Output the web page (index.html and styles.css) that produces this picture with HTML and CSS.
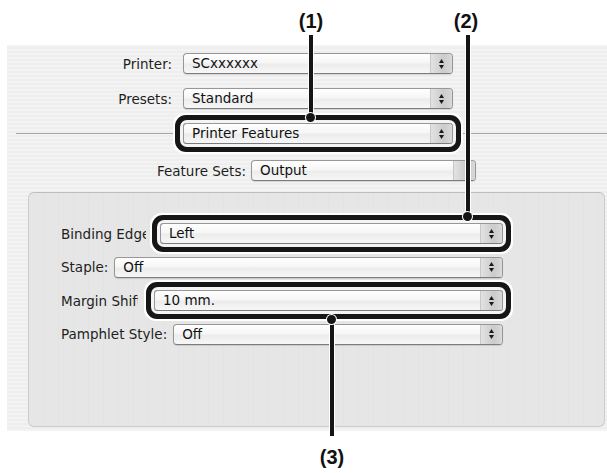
FILE: index.html
```html
<!DOCTYPE html>
<html>
<head>
  <title>Printer Features</title>
  <link rel="stylesheet" href="styles.css">
</head>
<body>
  <div class="page">
    <div class="dialog">
      <div class="top">
        <span class="label">Printer:</span>
        <div class="popup"><span class="value">SCxxxxxx</span><span class="arrows"><svg width="7" height="12" viewBox="0 0 7 12"><polygon points="3.5,1 6,5 1,5"/><polygon points="1,7 6,7 3.5,11"/></svg></span></div>
        <span class="label">Presets:</span>
        <div class="popup"><span class="value">Standard</span><span class="arrows"><svg width="7" height="12" viewBox="0 0 7 12"><polygon points="3.5,1 6,5 1,5"/><polygon points="1,7 6,7 3.5,11"/></svg></span></div>
      </div>

      <div class="sep-row">
        <div class="rule rule-left"></div>
        <div class="popup popup-pane hl"><span class="value">Printer Features</span><span class="arrows"><svg width="7" height="12" viewBox="0 0 7 12"><polygon points="3.5,1 6,5 1,5"/><polygon points="1,7 6,7 3.5,11"/></svg></span></div>
        <div class="rule"></div>
      </div>

      <div class="sets">
        <span class="label">Feature Sets:</span>
        <div class="popup"><span class="value">Output</span><span class="arrows"></span></div>
      </div>

      <div class="box">
        <div class="opt">
          <span class="label label-binding">Binding Edge:</span>
          <div class="popup hl"><span class="value">Left</span><span class="arrows"><svg width="7" height="12" viewBox="0 0 7 12"><polygon points="3.5,1 6,5 1,5"/><polygon points="1,7 6,7 3.5,11"/></svg></span></div>
        </div>
        <div class="opt">
          <span class="label">Staple:</span>
          <div class="popup"><span class="value">Off</span><span class="arrows"><svg width="7" height="12" viewBox="0 0 7 12"><polygon points="3.5,1 6,5 1,5"/><polygon points="1,7 6,7 3.5,11"/></svg></span></div>
        </div>
        <div class="opt">
          <span class="label label-margin">Margin Shift:</span>
          <div class="popup hl"><span class="value">10 mm.</span><span class="arrows"><svg width="7" height="12" viewBox="0 0 7 12"><polygon points="3.5,1 6,5 1,5"/><polygon points="1,7 6,7 3.5,11"/></svg></span></div>
        </div>
        <div class="opt">
          <span class="label">Pamphlet Style:</span>
          <div class="popup"><span class="value">Off</span><span class="arrows"><svg width="7" height="12" viewBox="0 0 7 12"><polygon points="3.5,1 6,5 1,5"/><polygon points="1,7 6,7 3.5,11"/></svg></span></div>
        </div>
      </div>
    </div>

    <!-- callout marks drawn over the dialog -->
    <div class="callouts">
      <span class="num num-1">(1)</span>
      <span class="num num-2">(2)</span>
      <span class="num num-3">(3)</span>
      <div class="vline line-1"></div>
      <div class="vline line-2"></div>
      <div class="vline line-3"></div>
      <div class="dot dot-1"></div>
      <div class="dot dot-2"></div>
      <div class="dot dot-3"></div>
    </div>
  </div>
</body>
</html>
```

FILE: styles.css
```css
body {
  margin: 0;
  background: #fff;
  font-family: "DejaVu Sans", sans-serif;
  font-size: 13.5px;
  color: #1e1e1e;
}

.page {
  position: relative;
  width: 607px;
  height: 473px;
  overflow: hidden;
  padding-top: 45px;
  box-sizing: border-box;
}

.dialog {
  margin-left: 7px;
  width: 600px;
  height: 386px;
  box-sizing: border-box;
  padding-top: 8px;
  background: repeating-linear-gradient(#f3f3f3 0, #f3f3f3 2px, #eeeeee 2px, #eeeeee 4px);
}

.label {
  white-space: nowrap;
}

.top {
  display: grid;
  grid-template-columns: 165px 270px;
  column-gap: 11px;
  row-gap: 14px;
  align-items: center;
}

.top .label {
  text-align: right;
}

.popup {
  display: flex;
  height: 21px;
  box-sizing: border-box;
  border: 1px solid #979797;
  border-bottom-color: #7c7c7c;
  border-radius: 4px;
  background: linear-gradient(#ffffff, #f6f6f6 45%, #ececec 55%, #f7f7f7);
  box-shadow: 0 1px 1px rgba(0, 0, 0, 0.12);
  color: #111;
}

.popup .value {
  flex: 1;
  padding-left: 8px;
  line-height: 19px;
  white-space: nowrap;
  overflow: hidden;
}

.popup .arrows {
  width: 21px;
  display: flex;
  align-items: center;
  justify-content: center;
  border-left: 1px solid #c8c8c8;
  border-radius: 0 3px 3px 0;
  background: linear-gradient(90deg, #e2e2e2, #cbcbcb 60%, #d9d9d9);
}

.popup .arrows svg {
  fill: #1a1a1a;
}

.hl {
  position: relative;
  z-index: 2;
  box-shadow: 0 0 0 3px #f4f4f4, 0 0 0 8px #161616, 0 0 0 10px #fff;
}

.sep-row {
  display: flex;
  align-items: center;
  margin-top: 14px;
  margin-left: 9px;
}

.rule {
  flex: 1;
  height: 1px;
  background: #a6a6a6;
}

.rule-left {
  flex: none;
  width: 167px;
}

.popup-pane {
  width: 270px;
}

.sets {
  display: grid;
  grid-template-columns: 239px 225px;
  column-gap: 5px;
  align-items: center;
  margin-top: 16px;
}

.sets .label {
  text-align: right;
}

.box {
  margin: 11px 2px 0 21px;
  height: 235px;
  box-sizing: border-box;
  padding: 30px 101px 0 32px;
  border: 1px solid #cbcbcb;
  border-top-color: #bdbdbd;
  border-radius: 6px;
  background: repeating-linear-gradient(90deg, #e6e6e6 0, #e6e6e6 14px, #e3e3e3 14px, #e3e3e3 15px);
  display: flex;
  flex-direction: column;
  gap: 12.5px;
}

.opt {
  display: flex;
  align-items: center;
  gap: 6px;
}

.opt .popup {
  flex: 1;
}

/* these two labels are partly covered by the popup, as in the dialog */
.label-binding {
  flex: none;
  width: 85px;
  margin-right: 8px;
  overflow: hidden;
}

.label-margin {
  flex: none;
  width: 77px;
  margin-right: 10px;
  overflow: hidden;
}

.callouts {
  position: absolute;
  left: 0;
  top: 0;
  width: 607px;
  height: 473px;
  z-index: 5;
}

.num {
  position: absolute;
  font-family: "Liberation Sans", Arial, sans-serif;
  font-weight: bold;
  font-size: 20px;
  color: #111;
  width: 40px;
  text-align: center;
}

.num-1 { left: 291px; top: 10px; }
.num-2 { left: 446px; top: 10px; }
.num-3 { left: 312px; top: 446px; }

.vline {
  position: absolute;
  width: 4px;
  background: #151515;
  box-shadow: 0 0 0 1px #fff;
}

.line-1 { left: 309px; top: 35px; height: 83px; }
.line-2 { left: 466px; top: 35px; height: 182px; }
.line-3 { left: 330px; top: 320px; height: 116px; }

.dot {
  position: absolute;
  width: 9px;
  height: 9px;
  border-radius: 50%;
  background: #151515;
  box-shadow: 0 0 0 1px #fff;
}

.dot-1 { left: 306px; top: 113px; }
.dot-2 { left: 463px; top: 212px; }
.dot-3 { left: 327px; top: 315px; }
```
